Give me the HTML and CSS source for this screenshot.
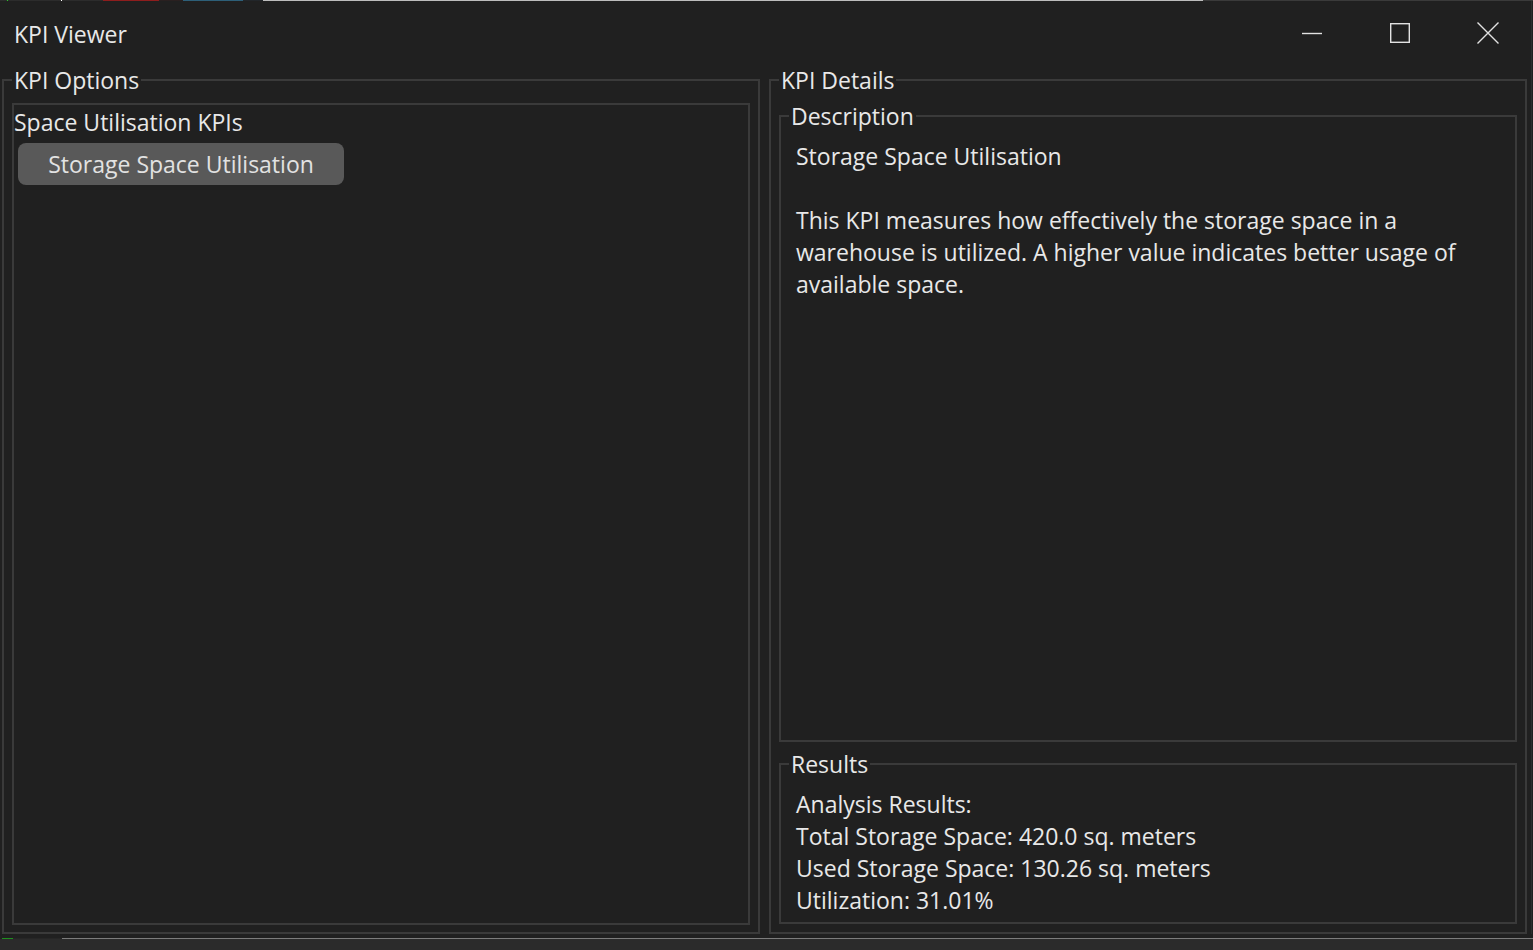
FILE: index.html
```html
<!DOCTYPE html>
<html lang="en">
<head>
<meta charset="utf-8">
<title>KPI Viewer</title>
<link rel="stylesheet" href="styles.css">
</head>
<body>
<div class="app">
  <div class="topstrip"></div>
  <div class="window">
    <header class="titlebar">
      <div class="title">KPI Viewer</div>
      <div class="controls">
        <button class="ctl" aria-label="Minimize">
          <svg width="22" height="22" viewBox="0 0 22 22"><path d="M1 11.5H21" stroke="#e2e2e2" stroke-width="1.4" fill="none"/></svg>
        </button>
        <button class="ctl" aria-label="Maximize">
          <svg width="22" height="22" viewBox="0 0 22 22"><rect x="1.7" y="1.7" width="18.6" height="18.6" stroke="#e2e2e2" stroke-width="1.4" fill="none"/></svg>
        </button>
        <button class="ctl" aria-label="Close">
          <svg width="24" height="24" viewBox="0 0 24 24"><path d="M1.5 1.5L22.5 22.5M22.5 1.5L1.5 22.5" stroke="#e2e2e2" stroke-width="1.4" fill="none"/></svg>
        </button>
      </div>
    </header>
    <main class="main">
      <fieldset class="group">
        <legend class="legend">KPI Options</legend>
        <div class="frame">
          <div class="frame-label">Space Utilisation KPIs</div>
          <button class="kpi-btn">Storage Space Utilisation</button>
        </div>
      </fieldset>
      <fieldset class="group group-col">
        <legend class="legend">KPI Details</legend>
        <fieldset class="group sub grow">
          <legend class="legend">Description</legend>
          <div class="text">Storage Space Utilisation<br><br>This KPI measures how effectively the storage space in a<br>warehouse is utilized. A higher value indicates better usage of<br>available space.</div>
        </fieldset>
        <fieldset class="group sub results">
          <legend class="legend">Results</legend>
          <div class="text">Analysis Results:<br>Total Storage Space: 420.0 sq. meters<br>Used Storage Space: 130.26 sq. meters<br>Utilization: 31.01%</div>
        </fieldset>
      </fieldset>
    </main>
  </div>
  <div class="bottomline"></div>
  <div class="taskband"></div>
</div>
</body>
</html>
```
FILE: styles.css
```css
* { box-sizing: border-box; }

html, body {
  margin: 0;
  padding: 0;
  background: #202020;
  height: 950px;
  overflow: hidden;
}

body {
  font-family: "Open Sans", "Noto Sans", sans-serif;
  font-size: 23px;
  color: #e8e8e8;
}

.app {
  display: flex;
  flex-direction: column;
  height: 950px;
}

.topstrip {
  height: 1px;
  flex: none;
  background: linear-gradient(to right,
    #2c2c2c 0, #2c2c2c 7px, #27c827 7px, #27c827 8px, #2c2c2c 8px, #2c2c2c 61px,
    #ffffff 61px, #ffffff 62px, #2c2c2c 62px, #2c2c2c 103px,
    #8e1d1d 103px, #8e1d1d 159px, #2a2020 159px, #2a2020 183px,
    #2d5f78 183px, #2d5f78 243px, #22262a 243px, #22262a 263px,
    #bdbdbd 263px, #bdbdbd 1203px, #3a3a3a 1203px, #3a3a3a 100%);
}

.window {
  flex: 1;
  display: flex;
  flex-direction: column;
  width: 1532px;
  border-right: 1px solid #2e2e2e;
}

.titlebar {
  height: 65px;
  flex: none;
  display: flex;
  align-items: center;
  justify-content: space-between;
  padding-left: 14px;
}

.title {
  font-size: 23px;
  line-height: 30px;
}

.controls {
  display: flex;
  height: 100%;
}

.ctl {
  width: 88px;
  height: 100%;
  border: 0;
  margin: 0;
  padding: 0 0 2px 2px;
  background: transparent;
  display: flex;
  align-items: center;
  justify-content: center;
}

.main {
  height: 868px;
  flex: none;
  display: grid;
  grid-template-columns: 1fr 1fr;
  column-gap: 9px;
  padding: 0 4px 0 2px;
}

.group {
  margin: 0;
  min-width: 0;
  border: 2px solid #3a3a3a;
  padding: 8px;
}

.legend {
  padding: 0 2px;
  margin: 0;
  font-size: 23px;
  line-height: 28px;
  color: #e8e8e8;
}

.group-col {
  display: flex;
  flex-direction: column;
  gap: 8px;
}

.grow {
  flex: 1;
}

.sub {
  padding: 8px 8px 6px 8px;
}

.results {
  flex: none;
}

.text {
  padding: 2px 7px 0 7px;
  line-height: 32px;
  font-size: 23px;
  white-space: nowrap;
}

.frame {
  height: 100%;
  border: 2px solid #3a3a3a;
  padding: 3px 0 0 0;
  margin-top: 1px;
}

.frame-label {
  line-height: 28px;
  font-size: 23px;
}

.kpi-btn {
  display: block;
  margin: 7px 0 0 4px;
  width: 326px;
  height: 42px;
  border: 0;
  border-radius: 8px;
  background: #595959;
  color: #e2e2e2;
  font-family: inherit;
  font-size: 23px;
  line-height: 28px;
  padding: 0;
  text-align: center;
}

.bottomline {
  margin-top: 4px;
  height: 1px;
  flex: none;
  background: linear-gradient(to right,
    #202020 0, #202020 2px, #1f8f1f 2px, #1f8f1f 13px,
    #262626 13px, #262626 62px, #7c7c7c 62px, #7c7c7c 100%);
}

.taskband {
  flex: 1;
  background: #2b2b2b;
}
```
